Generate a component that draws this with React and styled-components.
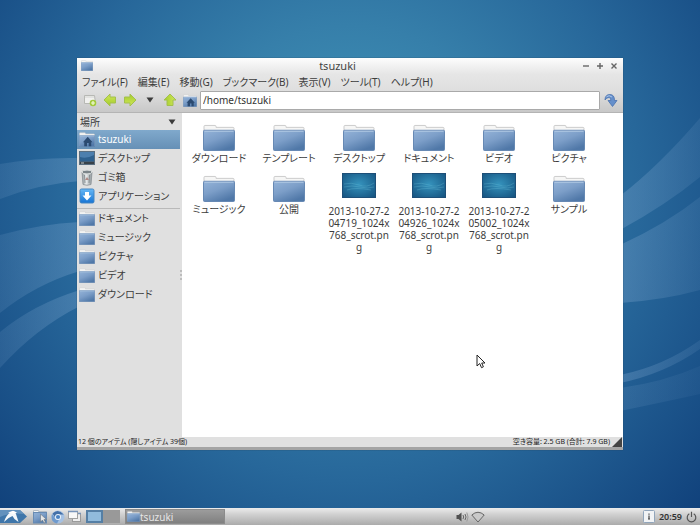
import React, { useState } from "react";
import styled, { createGlobalStyle, css } from "styled-components";

const GlobalStyle = createGlobalStyle`
  *, *::before, *::after { box-sizing: border-box; }
  body {
    margin: 0;
    font-family: "Noto Sans", "Noto Sans CJK JP", sans-serif;
    font-size: 10px;
    line-height: 12px;
    color: #3c3c3c;
  }
  svg { display: block; flex: none; }
  ul { list-style: none; margin: 0; padding: 0; }
`;

const Screen = styled.div`
  display: flex;
  flex-direction: column;
  min-height: 100vh;
  position: relative;
  isolation: isolate;
  overflow: hidden;
`;

const Backdrop = styled.svg`
  position: absolute;
  inset: 0;
  width: 100%;
  height: 100%;
  z-index: -1;
`;

const Desktop = styled.main`
  flex: 1;
  display: flex;
  padding: 58px 77px;
`;

const Window = styled.section`
  position: relative;
  flex: 1;
  display: flex;
  flex-direction: column;
  min-width: 0;
  background: #e0e0e0;
  border-bottom: 3px solid #a4a4a4;
  box-shadow: 0 0 1px #24425c;
`;

const WindowHead = styled.header`
  background: linear-gradient(#fdfdfd, #e6e6e6 16px, #dedede 34px, #c8c8c8);
  border-bottom: 1px solid #b4b4b4;
`;

const plainButton = css`
  display: flex;
  align-items: center;
  border: 0;
  margin: 0;
  padding: 0;
  background: none;
  color: inherit;
  font: inherit;
  font-feature-settings: "palt";
  white-space: nowrap;
`;

const TitleBar = styled.div`
  display: grid;
  grid-template-columns: auto 1fr auto;
  align-items: center;
  height: 15px;
  padding: 0 5px 0 4px;
`;

const Title = styled.h1`
  margin: 0;
  font-size: 11px;
  font-weight: 400;
  line-height: 15px;
  text-align: center;
  color: #444;
`;

const WindowButtons = styled.div`
  display: flex;
  justify-content: flex-end;
  gap: 6px;
`;

const IconButton = styled.button`
  ${plainButton}
  justify-content: center;
`;

const MenuBar = styled.nav`
  display: flex;
  gap: 10px;
  height: 17px;
  padding: 0 5px;
`;

const MenuItem = styled.button`
  ${plainButton}
`;

const Toolbar = styled.div`
  display: flex;
  align-items: center;
  gap: 6px;
  height: 22px;
  padding: 0 5px 2px 6px;
`;

const AddressBar = styled.div`
  flex: 1;
  display: flex;
  align-items: center;
  gap: 3px;
  min-width: 0;
  margin-right: -2px;
`;

const PathInput = styled.input`
  flex: 1;
  min-width: 0;
  height: 19px;
  padding: 0 2px;
  border: 1px solid #a9a9a9;
  border-radius: 1px;
  background: #fff;
  color: #333;
  font: inherit;
`;

const Content = styled.div`
  flex: 1;
  display: grid;
  grid-template-columns: 103px 2px 1fr;
  min-height: 0;
`;

const Sidebar = styled.aside`
  display: flex;
  flex-direction: column;
`;

const SidebarHead = styled.button`
  ${plainButton}
  justify-content: space-between;
  height: 17px;
  padding: 0 4px 0 3px;
`;

const PlaceList = styled.ul`
  & + & {
    border-top: 1px solid #b9b9b9;
    margin-top: 2px;
  }
`;

const Place = styled.button`
  ${plainButton}
  width: 100%;
  height: 19px;
  padding: 0 0 1px 2px;
  gap: 3px;
  ${(p) =>
    p.$active &&
    css`
      background: linear-gradient(#80a9cc, #6690b6);
      color: #fff;
    `}
`;

const Splitter = styled.div`
  display: grid;
  place-items: center;
`;

const Files = styled.ul`
  display: grid;
  grid-template-columns: repeat(auto-fill, 70px);
  align-content: start;
  row-gap: 3px;
  padding: 9px 2px 0;
  background: #fff;
`;

const File = styled.button`
  ${plainButton}
  flex-direction: column;
  width: 100%;
  min-height: 48px;
`;

const Picture = styled.span`
  display: grid;
  height: ${(p) => (p.$thumb ? "32px" : "30px")};
  place-items: ${(p) => (p.$thumb ? "start center" : "center")};
`;

const FileName = styled.span`
  width: 64px;
  text-align: center;
  white-space: normal;
  word-break: ${(p) => (p.$wrap ? "break-all" : "keep-all")};
`;

const StatusBar = styled.footer`
  display: flex;
  align-items: center;
  height: 10px;
  font-size: 7px;
  line-height: 10px;
  font-feature-settings: "palt";
  padding-left: 1px;
  color: #222;
`;

const StatusText = styled.span`
  flex: ${(p) => (p.$grow ? 1 : "none")};
  margin-right: 2px;
  white-space: nowrap;
`;

const Pointer = styled.svg`
  position: absolute;
  left: 73%;
  top: 76%;
`;

const Panel = styled.footer`
  display: flex;
  align-items: center;
  height: 17px;
  background: linear-gradient(#ececec, #d2d2d2 35%, #ababab);
`;

const Launchers = styled.div`
  display: flex;
  align-items: center;
  gap: 3px;
  margin: 0 4px 0 5px;
`;

const Pager = styled.div`
  display: flex;
`;

const Workspace = styled.button`
  width: 17px;
  height: 13px;
  padding: 0;
  border: 2px solid ${(p) => (p.$active ? "#557fa5" : "#999")};
  background: ${(p) => (p.$active ? "#91bbdc" : "#999")};
`;

const Task = styled.button`
  ${plainButton}
  width: 100px;
  height: 15px;
  margin-left: 5px;
  padding-left: 1px;
  background: linear-gradient(#9c9c9c, #808080);
  border: 1px solid #8b8b8b;
  color: #e6e6e6;
`;

const Tray = styled.div`
  display: flex;
  align-items: center;
  margin-left: auto;
  width: 244px;
  gap: 2px;
  padding-right: 3px;
`;

const TrayEnd = styled.div`
  display: flex;
  align-items: center;
  gap: 4px;
  margin-left: auto;
`;

const Clock = styled.time`
  font-size: 9px;
  font-weight: 600;
  color: #333;
`;

function Wallpaper() {
  return (
    <Backdrop viewBox="0 0 700 525" preserveAspectRatio="none" aria-hidden="true">
      <defs>
        <radialGradient id="sky" gradientUnits="userSpaceOnUse" cx="350" cy="190" r="470">
          <stop offset="0" stopColor="#439abb" />
          <stop offset="0.35" stopColor="#367faa" />
          <stop offset="0.62" stopColor="#27679a" />
          <stop offset="1" stopColor="#11427c" />
        </radialGradient>
        <linearGradient id="waveLeft" x1="0" x2="1">
          <stop offset="0" stopColor="#8bb0d6" stopOpacity="0.14" />
          <stop offset="1" stopColor="#8bb0d6" stopOpacity="0.3" />
        </linearGradient>
        <linearGradient id="waveRight" x1="0" x2="1">
          <stop offset="0" stopColor="#8bb0d6" stopOpacity="0.3" />
          <stop offset="1" stopColor="#8bb0d6" stopOpacity="0.12" />
        </linearGradient>
      </defs>
      <rect width="700" height="525" fill="url(#sky)" />
      <g fill="url(#waveLeft)">
        <path d="M0 164Q38 157 80 158V181Q38 184 0 199Z" />
        <path d="M0 235Q40 224 80 222V271Q36 284 0 313Z" />
        <path d="M0 332Q34 304 80 290V306Q36 328 0 368Z" />
      </g>
      <g fill="url(#waveRight)">
        <path d="M620 196Q660 165 700 118V177Q666 205 620 230Z" />
        <path d="M620 245Q666 224 700 197V290Q664 300 620 303Z" />
        <path d="M620 375Q664 366 700 340V349Q664 374 620 383Z" />
        <path d="M620 388Q664 382 700 366V394Q664 402 620 411Z" opacity="0.5" />
      </g>
    </Backdrop>
  );
}

function Gradients() {
  return (
    <svg width="0" height="0" aria-hidden="true">
      <defs>
        <linearGradient id="folderFace" x1="0" y1="0" x2="0.6" y2="1">
          <stop offset="0" stopColor="#94b3d8" />
          <stop offset="0.5" stopColor="#7c9ec8" />
          <stop offset="1" stopColor="#5078a8" />
        </linearGradient>
        <linearGradient id="leaf" x1="0" y1="0" x2="0" y2="1">
          <stop offset="0" stopColor="#cfe65a" />
          <stop offset="1" stopColor="#a4cc2c" />
        </linearGradient>
        <radialGradient id="sea" cx="0.5" cy="0.45" r="0.7">
          <stop offset="0" stopColor="#3593bd" />
          <stop offset="1" stopColor="#15527f" />
        </radialGradient>
        <linearGradient id="download" x1="0" y1="0" x2="0" y2="1">
          <stop offset="0" stopColor="#66b8f6" />
          <stop offset="1" stopColor="#1674d4" />
        </linearGradient>
        <linearGradient id="metal" x1="0" x2="1">
          <stop offset="0" stopColor="#858e92" />
          <stop offset="0.4" stopColor="#eceff0" />
          <stop offset="1" stopColor="#8b9397" />
        </linearGradient>
      </defs>
    </svg>
  );
}

function Folder({ width, height, home }) {
  return (
    <svg width={width} height={height} viewBox="0 0 32 28" preserveAspectRatio="none" aria-hidden="true">
      <path d="M1 26V2.500Q1 1.500 2 1.500H12Q13 1.500 13 2.500V3.500H30Q31 3.500 31 4.500V26Z" fill="#f6f6f5" stroke="#cbcbcb" />
      <path d="M0.500 7.500Q0.500 6.500 1.500 6.500H30.500Q31.500 6.500 31.500 7.500V26.500Q31.500 27.500 30.500 27.500H1.500Q0.500 27.500 0.500 26.500Z" fill="url(#folderFace)" stroke="#6588b3" />
      <path d="M1.500 7.500H30.500" stroke="#b3cae4" />
      {home && <path d="M8 19L17.500 9L27 19H24.500V26.500H19.500V20.500H16V26.500H10.500V19Z" fill="#2b4a70" />}
    </svg>
  );
}

function Thumbnail() {
  return (
    <svg width="34" height="25" viewBox="0 0 34 25" aria-hidden="true">
      <rect width="34" height="25" fill="url(#sea)" />
      <path d="M2 11Q9 9 17 12T32 10M2 14Q10 12 18 14T32 14M5 17Q13 14 29 17" fill="none" stroke="#74c7df" strokeWidth="0.8" opacity="0.35" />
      <rect x="0.500" y="0.500" width="33" height="24" fill="none" stroke="#1d4f78" />
    </svg>
  );
}

function DesktopIcon() {
  return (
    <svg width="16" height="14" viewBox="0 0 16 14" aria-hidden="true">
      <rect x="0.500" y="0.500" width="15" height="13" fill="#4d7fae" stroke="#5a6e80" />
      <path d="M1 6Q8 8 15 4V10H1Z" fill="#2f618f" />
      <path d="M1 10.500H15V13H1Z" fill="#39424a" />
      <path d="M2 12H5" stroke="#c3ccd1" />
    </svg>
  );
}

function TrashIcon() {
  return (
    <svg width="16" height="17" viewBox="0 0 16 17" aria-hidden="true">
      <path d="M3 3L4 15.500Q8 17 12 15.500L13 3Z" fill="url(#metal)" stroke="#8a9195" strokeWidth="0.8" />
      <ellipse cx="8" cy="3" rx="5" ry="1.900" fill="#7b8489" stroke="#dadddd" />
      <path d="M5.500 6L6 14M10.500 6L10 14" stroke="#7b8387" strokeWidth="0.8" />
      <path d="M8 8L10 11H6Z" fill="#b08a86" />
    </svg>
  );
}

function AppsIcon() {
  return (
    <svg width="16" height="16" viewBox="0 0 16 16" aria-hidden="true">
      <rect x="1" y="1" width="14" height="14" rx="1.500" fill="url(#download)" stroke="#4687c3" />
      <path d="M6 4H10V7.500H12.500L8 12.500L3.500 7.500H6Z" fill="#fff" />
    </svg>
  );
}

function Arrow({ direction }) {
  const turn = { left: 0, up: 90, right: 180 }[direction];
  return (
    <svg width="14" height="14" viewBox="0 0 14 14" aria-hidden="true">
      <g transform={`rotate(${turn} 7 7)`}>
        <path d="M1 7L7 1V4H12.500V10H7V13Z" fill="url(#leaf)" stroke="#a3c04e" strokeLinejoin="round" />
      </g>
    </svg>
  );
}

function Caret({ size = 8 }) {
  return (
    <svg width={size} height="6" viewBox="0 0 8 6" aria-hidden="true">
      <path d="M0.500 0.500H7.500L4 5.500Z" fill="#3b3b3b" />
    </svg>
  );
}

function NewTabIcon() {
  return (
    <svg width="14" height="14" viewBox="0 0 14 14" aria-hidden="true">
      <path d="M1.500 2.500H11.500L12.500 10.500H1.500Z" fill="#f1f1ef" stroke="#b7b8b4" />
      <path d="M2 4H11" stroke="#d3d4d1" />
      <circle cx="10" cy="10" r="3.300" fill="#a3ca3d" />
      <path d="M8 10H12M10 8V12" stroke="#f2fad6" strokeWidth="1.200" />
    </svg>
  );
}

function GoIcon() {
  return (
    <svg width="14" height="15" viewBox="0 0 14 15" aria-hidden="true">
      <path d="M1 7Q1 1.500 6 1.500Q10.500 1.500 10.500 7.500H13L8.500 13.500L4 7.500H6.800Q7 4.500 5 4.500Q2.500 4.500 1 7Z" fill="#658fcb" stroke="#4a72ae" strokeWidth="0.8" strokeLinejoin="round" />
      <path d="M2.500 3.800Q5 1.500 8 4" fill="none" stroke="#abc5e8" />
    </svg>
  );
}

function Glyph({ d }) {
  return (
    <svg width="8" height="8" viewBox="0 0 8 8" aria-hidden="true">
      <path d={d} fill="none" stroke="#666" strokeWidth="1.400" />
    </svg>
  );
}

function StartIcon() {
  return (
    <svg width="28" height="17" viewBox="0 0 28 17" aria-hidden="true">
      <path d="M0 2H20L27 8.500L20 15H0Z" fill="#3f76aa" />
      <path d="M0 2H20L24 6Q10 4 0 9Z" fill="#729dc5" opacity="0.7" />
      <path d="M4 14Q6 7 11 4L14 3L16 6L18.500 14L14.500 11L12.500 8Q8 9.500 4 14Z" fill="#f4f8fb" />
      <path d="M8 4.500L13 2.800L17 4.500L14 6Z" fill="#fff" />
    </svg>
  );
}

function FileManagerIcon() {
  return (
    <svg width="15" height="15" viewBox="0 0 15 15" aria-hidden="true">
      <path d="M0.500 2V1.500H5.500V2.500H13.500V12H0.500Z" fill="#f3f4f5" stroke="#b4bcc5" />
      <rect x="0.500" y="3.500" width="13" height="10.500" fill="url(#folderFace)" stroke="#688bb3" />
      <path d="M7.500 5V13L9.500 11L11 14L12.500 13.300L11 10.500H13.500Z" fill="#e6e6e6" stroke="#687480" strokeWidth="0.6" />
    </svg>
  );
}

function ChromiumIcon() {
  return (
    <svg width="14" height="14" viewBox="0 0 14 14" aria-hidden="true">
      <circle cx="7" cy="7" r="6.500" fill="#a5c1e3" />
      <path d="M1.500 3.500Q7-2 12.800 4.500H7Q4.500 4.500 4.200 7.500Z" fill="#4470a8" />
      <path d="M1 4L4.500 9Q6 10.500 8 9.800L6 13.500Q-1 12 1 4Z" fill="#6f9acd" />
      <circle cx="7" cy="7" r="3" fill="#e9f1f9" />
      <circle cx="7" cy="7" r="2.100" fill="#4b82c2" />
    </svg>
  );
}

function WindowsIcon() {
  return (
    <svg width="14" height="13" viewBox="0 0 14 13" aria-hidden="true">
      <rect x="4.500" y="3.500" width="8" height="8" fill="#ededed" stroke="#9a9a9a" />
      <path d="M4 3.500H13" stroke="#7894ba" strokeWidth="1.500" />
      <rect x="0.500" y="1.500" width="9" height="7" fill="#f8f8f8" stroke="#a1a1a1" />
      <path d="M0 1.500H10" stroke="#7894ba" strokeWidth="1.500" />
    </svg>
  );
}

function VolumeIcon() {
  return (
    <svg width="13" height="12" viewBox="0 0 13 12" aria-hidden="true">
      <path d="M0.500 4H2.500L5.500 1.500V10.500L2.500 8H0.500Z" fill="#505050" />
      <path d="M7 4Q8.300 6 7 8M9 3Q11 6 9 9" fill="none" stroke="#666" />
      <path d="M10.800 1.500Q13.300 6 10.800 10.500" fill="none" stroke="#9a9a9a" />
    </svg>
  );
}

function WifiIcon() {
  return (
    <svg width="14" height="12" viewBox="0 0 14 12" aria-hidden="true">
      <path d="M0.800 4Q7-1.500 13.200 4L7 11Z" fill="#c9c9c9" stroke="#666" strokeLinejoin="round" />
    </svg>
  );
}

function InfoIcon() {
  return (
    <svg width="12" height="13" viewBox="0 0 12 13" aria-hidden="true">
      <rect x="0.500" y="0.500" width="11" height="12" rx="1" fill="#f1f3f5" stroke="#91a5bb" />
      <path d="M6 3.500V4.700M6 5.500V9M5 9H7" stroke="#444" strokeWidth="1.200" />
    </svg>
  );
}

function PowerIcon() {
  return (
    <svg width="11" height="12" viewBox="0 0 11 12" aria-hidden="true">
      <path d="M3.300 2.800A4.300 4.300 0 1 0 7.700 2.800M5.500 0.800V6" fill="none" stroke="#555" strokeWidth="1.200" />
    </svg>
  );
}

const menus = ["ファイル(F)", "編集(E)", "移動(G)", "ブックマーク(B)", "表示(V)", "ツール(T)", "ヘルプ(H)"];

const smallFolder = <Folder width={16} height={15} />;

const places = [
  { name: "tsuzuki", icon: <Folder width={16} height={15} home />, active: true },
  { name: "デスクトップ", icon: <DesktopIcon /> },
  { name: "ゴミ箱", icon: <TrashIcon /> },
  { name: "アプリケーション", icon: <AppsIcon /> },
];

const bookmarks = ["ドキュメント", "ミュージック", "ピクチャ", "ビデオ", "ダウンロード"].map((name) => ({
  name,
  icon: smallFolder,
}));

const files = [
  "ダウンロード",
  "テンプレート",
  "デスクトップ",
  "ドキュメント",
  "ビデオ",
  "ピクチャ",
  "ミュージック",
  "公開",
  "2013-10-27-204719_1024x768_scrot.png",
  "2013-10-27-204926_1024x768_scrot.png",
  "2013-10-27-205002_1024x768_scrot.png",
  "サンプル",
];

function Places({ items }) {
  return (
    <PlaceList>
      {items.map((item) => (
        <li key={item.name}>
          <Place type="button" $active={item.active}>
            {item.icon}
            {item.name}
          </Place>
        </li>
      ))}
    </PlaceList>
  );
}

function FileEntry({ name }) {
  const isImage = name.endsWith(".png");
  return (
    <li>
      <File type="button">
        <Picture $thumb={isImage}>{isImage ? <Thumbnail /> : <Folder width={32} height={27} />}</Picture>
        <FileName $wrap={isImage}>{name}</FileName>
      </File>
    </li>
  );
}

export default function App() {
  const [path, setPath] = useState("/home/tsuzuki");
  return (
    <Screen>
      <GlobalStyle />
      <Wallpaper />
      <Desktop>
        <Window>
          <WindowHead>
            <TitleBar>
              <Folder width={12} height={11} />
              <Title>tsuzuki</Title>
              <WindowButtons>
                <IconButton type="button" aria-label="最小化"><Glyph d="M1 4H7" /></IconButton>
                <IconButton type="button" aria-label="最大化"><Glyph d="M1 4H7M4 1V7" /></IconButton>
                <IconButton type="button" aria-label="閉じる"><Glyph d="M1.500 1.500L6.500 6.500M6.500 1.500L1.500 6.500" /></IconButton>
              </WindowButtons>
            </TitleBar>
            <MenuBar>
              {menus.map((menu) => (
                <MenuItem type="button" key={menu}>{menu}</MenuItem>
              ))}
            </MenuBar>
            <Toolbar>
              <IconButton type="button" aria-label="新しいタブ"><NewTabIcon /></IconButton>
              <IconButton type="button" aria-label="戻る"><Arrow direction="left" /></IconButton>
              <IconButton type="button" aria-label="進む"><Arrow direction="right" /></IconButton>
              <IconButton type="button" aria-label="履歴"><Caret size={14} /></IconButton>
              <IconButton type="button" aria-label="上へ"><Arrow direction="up" /></IconButton>
              <AddressBar>
                <IconButton type="button" aria-label="ホーム"><Folder width={14} height={13} home /></IconButton>
                <PathInput aria-label="場所" value={path} onChange={(e) => setPath(e.target.value)} />
              </AddressBar>
              <IconButton type="button" aria-label="移動"><GoIcon /></IconButton>
            </Toolbar>
          </WindowHead>
          <Content>
            <Sidebar>
              <SidebarHead type="button">場所<Caret /></SidebarHead>
              <Places items={places} />
              <Places items={bookmarks} />
            </Sidebar>
            <Splitter>
              <svg width="2" height="10" viewBox="0 0 2 10" aria-hidden="true">
                <path d="M0 1H2M0 5H2M0 9H2" stroke="#999" />
              </svg>
            </Splitter>
            <Files>
              {files.map((name) => <FileEntry key={name} name={name} />)}
            </Files>
          </Content>
          <StatusBar>
            <StatusText $grow>12 個のアイテム (隠しアイテム 39個)</StatusText>
            <StatusText>空き容量: 2.5 GB (合計: 7.9 GB)</StatusText>
            <svg width="11" height="10" viewBox="0 0 11 10" aria-hidden="true">
              <path d="M10 0V10H0Z" fill="#444" />
            </svg>
          </StatusBar>
          <Pointer width="10" height="15" viewBox="0 0 10 15" aria-hidden="true">
            <path d="M1 1V12L3.700 9.500L5.500 13.700L7.400 12.800L5.700 9H9Z" fill="#fff" stroke="#222" />
          </Pointer>
        </Window>
      </Desktop>
      <Panel>
        <IconButton type="button" aria-label="メニュー"><StartIcon /></IconButton>
        <Launchers>
          <IconButton type="button" aria-label="ファイルマネージャ"><FileManagerIcon /></IconButton>
          <IconButton type="button" aria-label="ブラウザ"><ChromiumIcon /></IconButton>
          <IconButton type="button" aria-label="全ウィンドウを最小化"><WindowsIcon /></IconButton>
        </Launchers>
        <Pager>
          <Workspace type="button" aria-label="デスクトップ 1" $active />
          <Workspace type="button" aria-label="デスクトップ 2" />
        </Pager>
        <Task type="button"><Folder width={13} height={11} />tsuzuki</Task>
        <Tray>
          <IconButton type="button" aria-label="音量"><VolumeIcon /></IconButton>
          <IconButton type="button" aria-label="ネットワーク"><WifiIcon /></IconButton>
          <TrayEnd>
            <IconButton type="button" aria-label="情報"><InfoIcon /></IconButton>
            <Clock>20:59</Clock>
            <IconButton type="button" aria-label="電源"><PowerIcon /></IconButton>
          </TrayEnd>
        </Tray>
      </Panel>
      <Gradients />
    </Screen>
  );
}
